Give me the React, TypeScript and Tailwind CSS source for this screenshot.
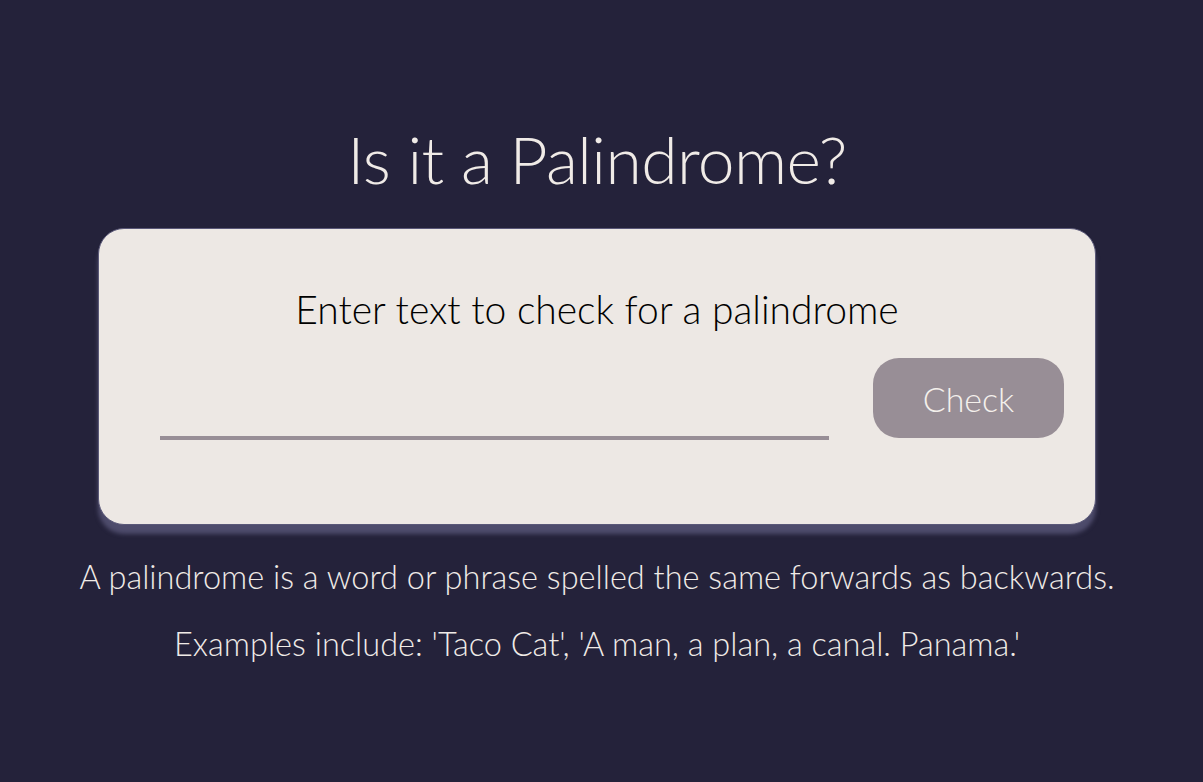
export default function App() {
  return (
    <div
      className="flex min-h-[782px] w-full flex-col items-center bg-[#24223a] pr-[9px] text-[#f0ebe7]"
      style={{ fontFamily: 'Lato, "Noto Sans", sans-serif' }}
    >
      <h1 className="mt-[121px] text-[66px] leading-[76px] font-light tracking-[-0.6px]">Is it a Palindrome?</h1>
      <div className="mt-[31px] flex h-[297px] w-[998px] flex-col items-center rounded-[26px] border border-[#5a5878] bg-[#ede8e4] shadow-[0_9px_4px_#4e4c6c]">
        <p className="mt-[56px] text-[39px] leading-[48px] font-light text-black">Enter text to check for a palindrome</p>
        <div className="mt-[25px] flex w-full items-start gap-[44px] pl-[61px]">
          <input
            type="text"
            className="mt-[22px] h-[60px] w-[669px] border-b-4 border-[#988e96] bg-transparent text-[28px] outline-none"
          />
          <button className="h-[80px] w-[191px] rounded-[26px] bg-[#988e96] text-[34px] font-light text-[#f4f0ec]">
            Check
          </button>
        </div>
      </div>
      <p className="mt-[32px] text-[32.5px] leading-[40px] font-light">
        A palindrome is a word or phrase spelled the same forwards as backwards.
      </p>
      <p className="mt-[27px] text-[32.5px] leading-[40px] font-light">
        Examples include: 'Taco Cat', 'A man, a plan, a canal. Panama.'
      </p>
    </div>
  )
}
